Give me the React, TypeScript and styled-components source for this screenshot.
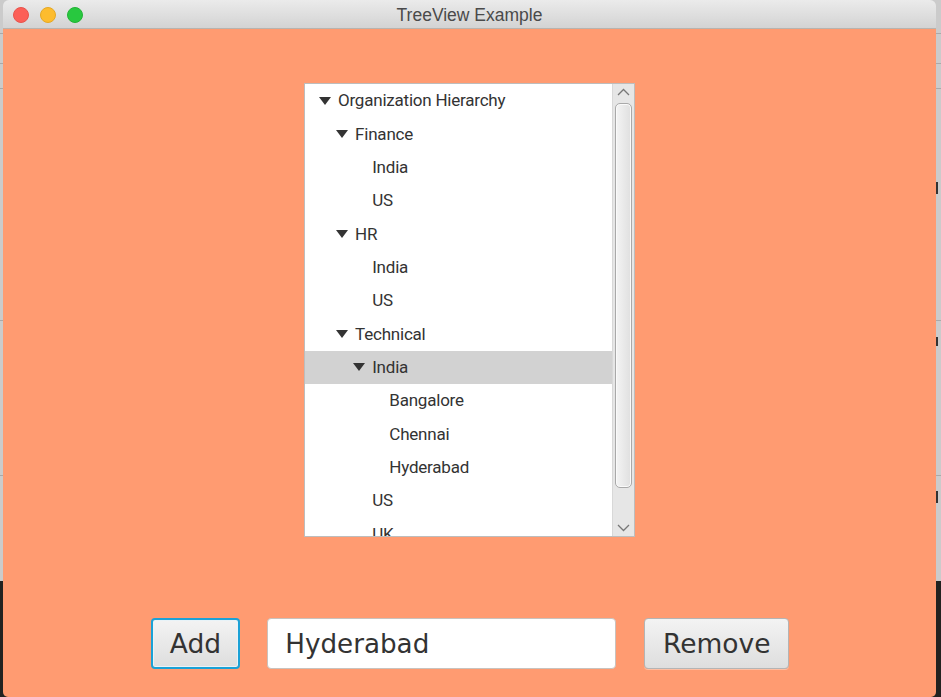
import React from "react";
import styled, { createGlobalStyle } from "styled-components";

const Global = createGlobalStyle`
  html, body { margin: 0; padding: 0; width: 941px; height: 697px; overflow: hidden; }
`;

const hLine = (y: number, c = "#a9a9a9") =>
  `linear-gradient(${c}, ${c}) 0 ${y}px / 100% 1px no-repeat`;
const glyph = (x: number, y: number, h: number) =>
  `linear-gradient(#333, #333) ${x}px ${y}px / 2px ${h}px no-repeat`;

const Desktop = styled.div`
  width: 941px;
  height: 697px;
  padding-left: 3px;
  box-sizing: border-box;
  background:
    ${glyph(936, 182, 12)},
    ${glyph(936, 337, 9)},
    ${glyph(936, 491, 12)},
    ${hLine(33)},
    ${hLine(63)},
    ${hLine(88)},
    ${hLine(320)},
    ${hLine(475)},
    linear-gradient(to bottom, #cbcbcb 0, #cbcbcb 581px, #222220 581px, #222220 100%);
  overflow: hidden;
`;

const Window = styled.div`
  width: 933px;
  height: 697px;
  display: flex;
  flex-direction: column;
  border-radius: 6px 6px 5px 5px;
  overflow: hidden;
`;

const TitleBar = styled.div`
  position: relative;
  flex: 0 0 29px;
  box-sizing: border-box;
  display: flex;
  align-items: center;
  justify-content: center;
  padding-top: 2px;
  background: linear-gradient(to bottom, #ebebeb, #d3d3d3);
  border-bottom: 1px solid #b8b3ae;
  font: 17.5px "Liberation Sans", Arial, sans-serif;
  color: #4a4a4a;
`;

const Lights = styled.div`
  position: absolute;
  left: 10px;
  top: 7px;
  display: flex;
  gap: 11px;
`;

const Light = styled.span<{ $c: string; $b: string }>`
  width: 16px;
  height: 16px;
  border-radius: 50%;
  box-sizing: border-box;
  background: ${(p) => p.$c};
  border: 1px solid ${(p) => p.$b};
`;

const Content = styled.div`
  flex: 1;
  background: #ff9b71;
  display: flex;
  flex-direction: column;
  align-items: center;
  padding-top: 54px;
`;

const TreePanel = styled.div`
  width: 331px;
  height: 454px;
  box-sizing: border-box;
  border: 1px solid #bdbdbd;
  background: #fff;
  display: flex;
  overflow: hidden;
`;

const Rows = styled.div`
  flex: 1;
  overflow: hidden;
`;

const Row = styled.div<{ $level: number; $selected?: boolean }>`
  height: 33.33px;
  box-sizing: border-box;
  display: flex;
  align-items: center;
  padding-left: ${(p) => 14 + p.$level * 17.1}px;
  padding-bottom: 0.6px;
  background: ${(p) => (p.$selected ? "#d2d2d2" : "transparent")};
  font: 17px Roboto, "Liberation Sans", sans-serif;
  letter-spacing: -0.22px;
  color: #333;
`;

const Arrow = styled.svg<{ $hidden?: boolean }>`
  width: 12px;
  height: 8px;
  flex: none;
  margin: 1px 7px 0 0;
  visibility: ${(p) => (p.$hidden ? "hidden" : "visible")};
`;

const Scrollbar = styled.div`
  position: relative;
  flex: 0 0 22px;
  background: #e6e6e6;
  border-left: 1px solid #d8d8d8;
  box-sizing: border-box;
`;

const ScrollIcon = styled.svg<{ $end: "top" | "bottom" }>`
  position: absolute;
  left: 4px;
  ${(p) => p.$end}: 4px;
  width: 13px;
  height: 8px;
`;

const Thumb = styled.div`
  position: absolute;
  left: 2px;
  right: 2px;
  top: 19px;
  height: 385px;
  box-sizing: border-box;
  border: 1px solid #a9a9a9;
  border-radius: 5px;
  background: linear-gradient(to right, #f4f4f4, #dfdfdf);
  box-shadow: inset 0 0 0 1px #fafafa;
`;

const BottomBar = styled.div`
  margin-top: 81px;
  padding-left: 1px;
  display: flex;
  align-items: flex-start;
  gap: 27px;
`;

const Button = styled.div<{ $width: number; $focused?: boolean }>`
  width: ${(p) => p.$width}px;
  height: 51px;
  box-sizing: border-box;
  display: flex;
  align-items: center;
  justify-content: center;
  border-radius: 4px;
  border: ${(p) => (p.$focused ? "2px solid #1ba1d6" : "1px solid #b4b4b4")};
  background: linear-gradient(to bottom, #f3f3f3, #dedede);
  box-shadow: ${(p) => (p.$focused ? "inset 0 0 0 1px #e8f3f8" : "0 1px 0 rgba(255,255,255,.35)")};
  font: 26.5px "DejaVu Sans", sans-serif;
  color: #333;
`;

const Field = styled.div`
  width: 349px;
  height: 51px;
  box-sizing: border-box;
  display: flex;
  align-items: center;
  padding-left: 17px;
  margin-right: 1px;
  background: #fff;
  border: 1px solid #c9c2bd;
  border-radius: 4px;
  font: 26.2px "DejaVu Sans", sans-serif;
  color: #333;
`;

const tree: { label: string; level: number; open?: boolean; selected?: boolean }[] = [
  { label: "Organization Hierarchy", level: 0, open: true },
  { label: "Finance", level: 1, open: true },
  { label: "India", level: 2 },
  { label: "US", level: 2 },
  { label: "HR", level: 1, open: true },
  { label: "India", level: 2 },
  { label: "US", level: 2 },
  { label: "Technical", level: 1, open: true },
  { label: "India", level: 2, open: true, selected: true },
  { label: "Bangalore", level: 3 },
  { label: "Chennai", level: 3 },
  { label: "Hyderabad", level: 3 },
  { label: "US", level: 2 },
  { label: "UK", level: 2 },
];

export default function App() {
  return (
    <Desktop>
      <Global />
      <Window>
        <TitleBar>
          <Lights>
            <Light $c="#fc5f57" $b="#e8534c" />
            <Light $c="#fdbc2e" $b="#e5a823" />
            <Light $c="#28c83f" $b="#22b335" />
          </Lights>
          TreeView Example
        </TitleBar>
        <Content>
          <TreePanel>
            <Rows>
              {tree.map((r, i) => (
                <Row key={i} $level={r.level} $selected={r.selected}>
                  <Arrow viewBox="0 0 12 8" $hidden={!r.open}>
                    <path d="M0 0H12L6 8Z" fill="#333" />
                  </Arrow>
                  {r.label}
                </Row>
              ))}
            </Rows>
            <Scrollbar>
              <ScrollIcon $end="top" viewBox="0 0 13 8">
                <path d="M1 7L6.5 1.5L12 7" fill="none" stroke="#777" strokeWidth="1.3" />
              </ScrollIcon>
              <Thumb />
              <ScrollIcon $end="bottom" viewBox="0 0 13 8">
                <path d="M1 1L6.5 6.5L12 1" fill="none" stroke="#777" strokeWidth="1.3" />
              </ScrollIcon>
            </Scrollbar>
          </TreePanel>
          <BottomBar>
            <Button $width={89.5} $focused>Add</Button>
            <Field>Hyderabad</Field>
            <Button $width={145}>Remove</Button>
          </BottomBar>
        </Content>
      </Window>
    </Desktop>
  );
}
